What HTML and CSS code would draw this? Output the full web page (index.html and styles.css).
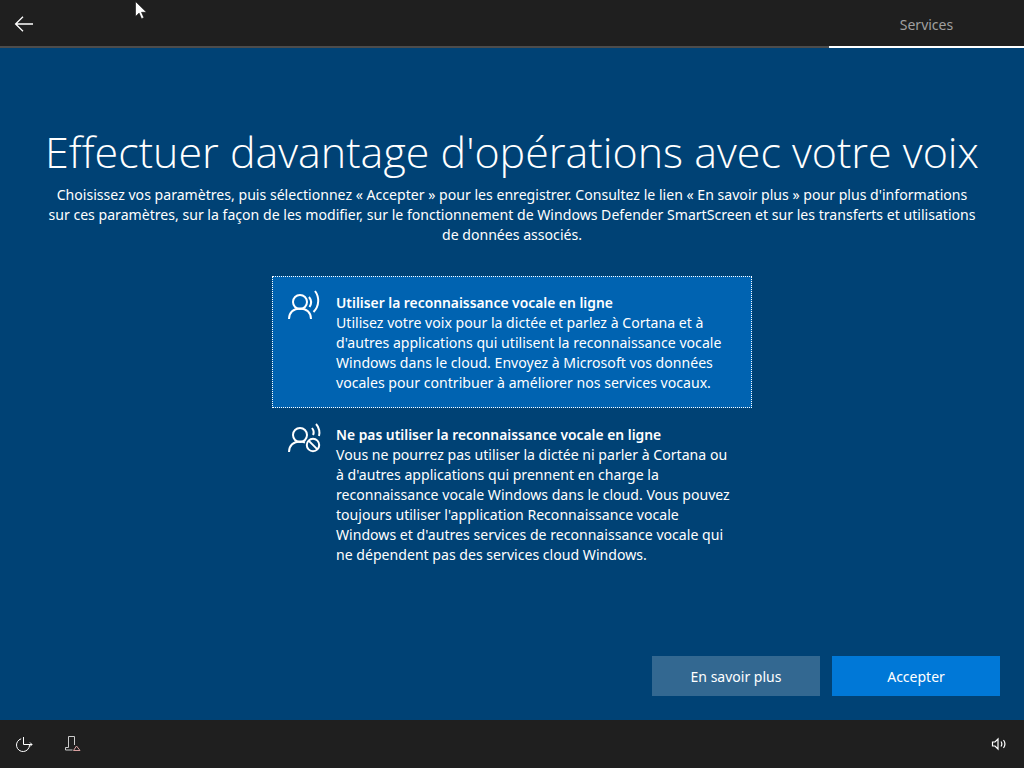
FILE: index.html
```html
<!DOCTYPE html>
<html lang="fr">
<head>
    <meta charset="UTF-8">
    <title>Services</title>
    <link rel="stylesheet" href="styles.css">
</head>
<body>
    <!-- Barre du haut -->
    <header class="topbar">
        <a href="#" class="btn-back" aria-label="Retour">
            <svg width="20" height="16" viewBox="0 0 20 16" fill="none" stroke="#fff" stroke-width="1.3">
                <path d="M9 .8 1.6 8 9 15.2M1.6 8H19"/>
            </svg>
        </a>
        <div class="tab">Services</div>
    </header>

    <svg class="cursor" width="13" height="19" viewBox="0 0 13 19">
        <path d="M.5.5v15l3.6-3.4 2.4 5.6 2.4-1-2.4-5.4h5z" fill="#fff" stroke="#111" stroke-width=".6"/>
    </svg>

    <main class="content">
        <h1>Effectuer davantage d'opérations avec votre voix</h1>
        <p class="intro">
            Choisissez vos paramètres, puis sélectionnez « Accepter » pour les enregistrer. Consultez le lien « En savoir plus » pour plus d'informations<br>
            sur ces paramètres, sur la façon de les modifier, sur le fonctionnement de Windows Defender SmartScreen et sur les transferts et utilisations<br>
            de données associés.
        </p>

        <div class="options">
            <div class="option selected">
                <svg class="option-icon" width="36" height="32" viewBox="0 0 36 32" fill="none" stroke="#fff" stroke-width="2">
                    <circle cx="12" cy="12" r="7"/>
                    <path d="M1 29c0-6.500 4.500-10.500 11-10.500S23 22.500 23 29"/>
                    <path d="M21 7c2.500 3 2.500 7 .5 10M27 1c4.500 6 4.500 15-1.500 21"/>
                </svg>
                <div class="option-text">
                    <h2>Utiliser la reconnaissance vocale en ligne</h2>
                    <p>Utilisez votre voix pour la dictée et parlez à Cortana et à<br>
                    d'autres applications qui utilisent la reconnaissance vocale<br>
                    Windows dans le cloud. Envoyez à Microsoft vos données<br>
                    vocales pour contribuer à améliorer nos services vocaux.</p>
                </div>
            </div>

            <div class="option">
                <svg class="option-icon" width="36" height="32" viewBox="0 0 36 32" fill="none" stroke="#fff" stroke-width="2">
                    <circle cx="12" cy="12" r="7"/>
                    <path d="M1 29c0-6.500 4.500-10.500 11-10.500 2 0 3.500.3 5 1"/>
                    <path d="M24 5c1.500 2 2 5 1 7M28 1c3.500 3.500 4 9 3 12"/>
                    <circle cx="25" cy="22" r="6.200"/>
                    <path d="m20.600 17.600 8.800 8.800"/>
                </svg>
                <div class="option-text">
                    <h2>Ne pas utiliser la reconnaissance vocale en ligne</h2>
                    <p>Vous ne pourrez pas utiliser la dictée ni parler à Cortana ou<br>
                    à d'autres applications qui prennent en charge la<br>
                    reconnaissance vocale Windows dans le cloud. Vous pouvez<br>
                    toujours utiliser l'application Reconnaissance vocale<br>
                    Windows et d'autres services de reconnaissance vocale qui<br>
                    ne dépendent pas des services cloud Windows.</p>
                </div>
            </div>
        </div>

        <div class="actions">
            <button class="btn btn-secondary">En savoir plus</button>
            <button class="btn btn-primary">Accepter</button>
        </div>
    </main>

    <!-- Barre du bas -->
    <footer class="bottombar">
        <div class="bottom-left">
            <svg width="18" height="18" viewBox="0 0 18 18" fill="none" stroke="#fff" stroke-width="1">
                <path d="M5.200 3.800a6.500 6.500 0 1 0 8.300 6.200"/>
                <path d="M7.500 2v7.500H16M14 7.500l2 2-2 2"/>
            </svg>
            <svg width="18" height="18" viewBox="0 0 18 18" fill="none" stroke="#ccc" stroke-width="1">
                <path d="M9.500 10V1.500h-6V12.500h-3v2.500h7"/>
                <path d="m11.500 11 3.500 4.500H8.500z" stroke="#d9a0a0"/>
            </svg>
        </div>
        <svg width="16" height="16" viewBox="0 0 16 16" fill="none" stroke="#fff" stroke-width="1.200">
            <path d="M2.500 6H5l3-3v10l-3-3H2.500zM11 5.500c1 1.500 1 3.500 0 5M13.500 4c1.800 2.500 1.800 5.500 0 8"/>
        </svg>
    </footer>
</body>
</html>
```

FILE: styles.css
```css
body {
  font-family: "Noto Sans", "Open Sans", sans-serif;
  background-color: #004275;
  color: white;
  margin: 0;
  display: flex;
  flex-direction: column;
  height: 100vh;
  overflow: hidden;
}

/* Barre du haut */
.topbar {
  height: 46px;
  background-color: #1f1f1f;
  border-bottom: 2px solid #4c4c4c;
  display: flex;
  justify-content: space-between;
  flex-shrink: 0;
}

.btn-back {
  display: flex;
  align-items: center;
  padding: 0 14px;
  height: 48px;
  box-sizing: border-box;
}

.tab {
  width: 195px;
  height: 48px;
  box-sizing: border-box;
  border-bottom: 2px solid white;
  padding-top: 2px;
  display: flex;
  align-items: center;
  justify-content: center;
  font-size: 14px;
  color: #a0a0a0;
}

.cursor {
  position: absolute;
  top: 1px;
  left: 135px;
}

/* Contenu */
.content {
  flex: 1;
  display: flex;
  flex-direction: column;
  align-items: center;
}

h1 {
  font-family: "Open Sans", sans-serif;
  font-size: 43px;
  font-weight: 300;
  line-height: 60px;
  margin: 74px 0 0;
  white-space: nowrap;
}

.intro {
  font-size: 14.100px;
  line-height: 20px;
  text-align: center;
  white-space: nowrap;
  margin: 3px 0 0;
}

.options {
  width: 480px;
  margin-top: 31px;
  display: flex;
  flex-direction: column;
  gap: 1px;
}

.option {
  display: flex;
  gap: 12px;
  padding: 15px;
  border: 1px solid transparent;
}

.option.selected {
  background-color: #0063b1;
  border: 1px dotted white;
  padding: 16px 15px 14px;
}

.option-icon {
  flex-shrink: 0;
  margin-top: -2px;
}

.option.selected .option-icon {
  margin-top: -3px;
}

.option-text h2 {
  font-size: 13.850px;
  font-weight: 600;
  line-height: 20px;
  margin: 0;
}

.option-text p {
  font-size: 14.100px;
  line-height: 20px;
  margin: 0;
  white-space: nowrap;
}

.actions {
  margin-top: auto;
  margin-bottom: 24px;
  align-self: flex-end;
  margin-right: 24px;
  display: flex;
  gap: 12px;
}

.btn {
  width: 168px;
  height: 40px;
  border: none;
  color: white;
  font-family: inherit;
  font-size: 14px;
}

.btn-secondary {
  background-color: #336891;
}

.btn-primary {
  background-color: #0078d7;
}

/* Barre du bas */
.bottombar {
  height: 48px;
  background-color: #1f1f1f;
  display: flex;
  align-items: center;
  justify-content: space-between;
  padding: 0 18px 0 16px;
  flex-shrink: 0;
}

.bottom-left {
  display: flex;
  gap: 31px;
}
```
